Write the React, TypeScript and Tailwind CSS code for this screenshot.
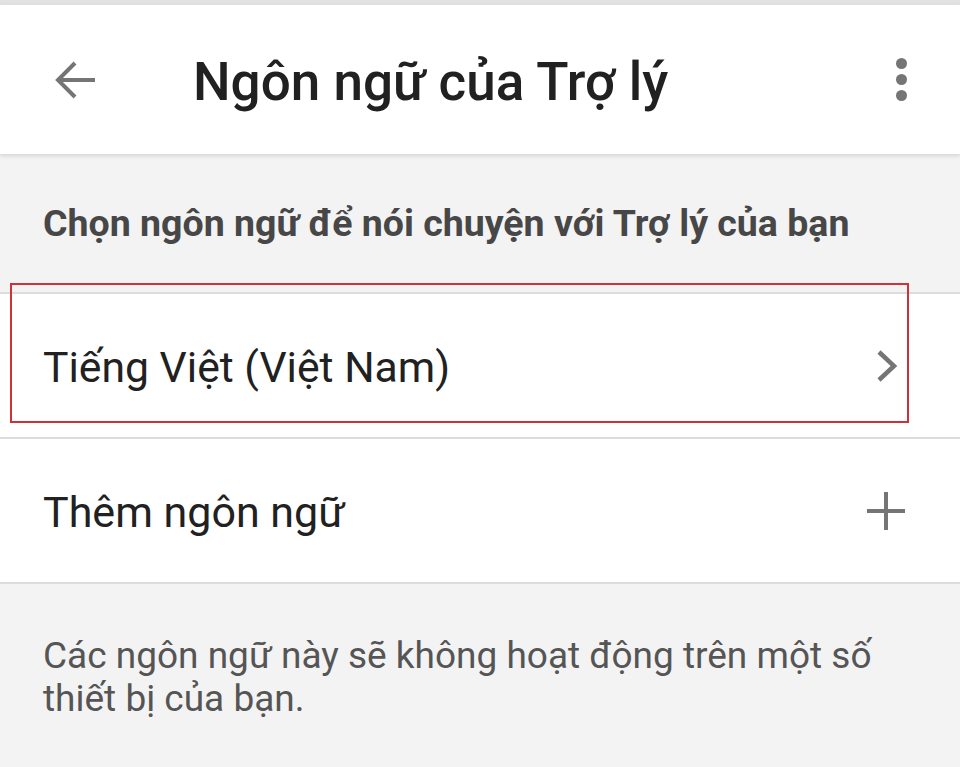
import React from "react";

export default function App() {
  return (
    <div
      className="relative w-[960px] h-[767px] overflow-hidden bg-[#f3f3f3]"
      style={{ fontFamily: "Roboto, 'Noto Sans', sans-serif" }}
    >
      <div className="h-[5px] bg-[#e2e2e2]" />
      <header className="relative z-10 h-[149px] bg-white flex items-center shadow-[0_2px_4px_rgba(0,0,0,0.12)]">
        <div className="w-[193px] pl-[54px] flex items-center">
          <svg width="42" height="42" viewBox="0 0 42 42" fill="none">
            <path d="M4 21 H41 M21 4 L4 21 L21 38" stroke="#757575" strokeWidth="4" strokeLinecap="butt" strokeLinejoin="miter" />
          </svg>
        </div>
        <h1 className="flex-1 text-[53px] font-medium text-[#212121] leading-none pt-[5px]">
          Ngôn ngữ của Trợ lý
        </h1>
        <div className="mr-[53px] flex flex-col items-center gap-[5px]">
          <span className="block w-[11px] h-[11px] rounded-full bg-[#757575]" />
          <span className="block w-[11px] h-[11px] rounded-full bg-[#757575]" />
          <span className="block w-[11px] h-[11px] rounded-full bg-[#757575]" />
        </div>
      </header>
      <div className="h-[138px] flex items-center pl-[43px] pt-[2px]">
        <p className="text-[37.5px] font-bold text-[#474747] leading-none">
          Chọn ngôn ngữ để nói chuyện với Trợ lý của bạn
        </p>
      </div>
      <div className="h-[2px] bg-[#dcdcdc]" />
      <div className="h-[143px] bg-white flex items-center justify-between pl-[43px] pr-[62px]">
        <span className="text-[42.7px] text-[#212121] leading-none pt-[3px]">Tiếng Việt (Việt Nam)</span>
        <svg width="22" height="32" viewBox="0 0 22 32" fill="none">
          <path d="M3 2 L18 16 L3 30" stroke="#757575" strokeWidth="4.5" />
        </svg>
      </div>
      <div className="h-[2px] bg-[#dcdcdc]" />
      <div className="h-[143px] bg-white flex items-center justify-between pl-[43px] pr-[55px]">
        <span className="text-[43px] text-[#212121] leading-none pt-[4px]">Thêm ngôn ngữ</span>
        <svg width="38" height="38" viewBox="0 0 38 38" fill="none">
          <path d="M19 0 V38 M0 19 H38" stroke="#757575" strokeWidth="4" />
        </svg>
      </div>
      <div className="h-[2px] bg-[#dcdcdc]" />
      <div className="pl-[43px] pr-[60px] pt-[50px]">
        <p className="text-[37px] text-[#555555] leading-[43px]">
          Các ngôn ngữ này sẽ không hoạt động trên một số thiết bị của bạn.
        </p>
      </div>
      <div className="absolute left-[10px] top-[283px] w-[899px] h-[140px] border-2 border-[#d0303a] pointer-events-none" />
    </div>
  );
}
